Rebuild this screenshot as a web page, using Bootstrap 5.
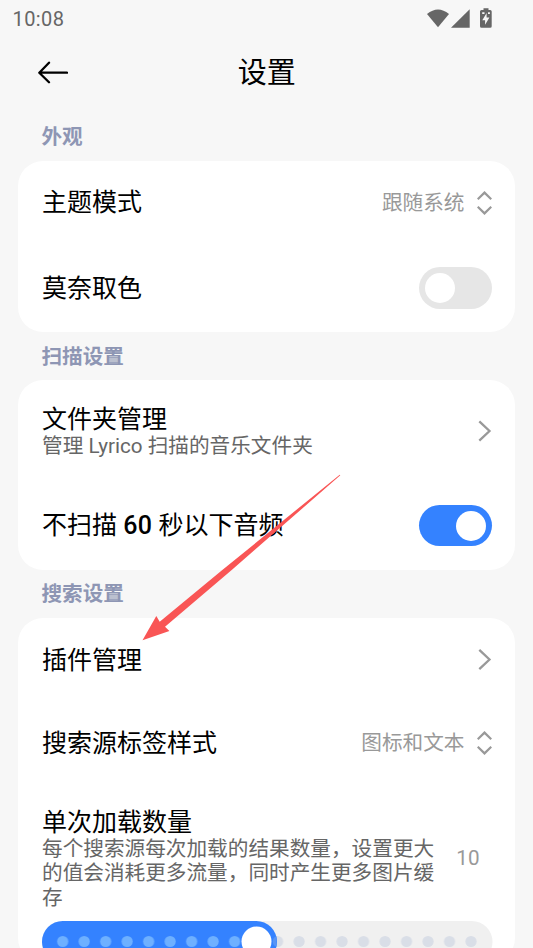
<!DOCTYPE html>
<html lang="zh-CN">
<head>
<meta charset="utf-8">
<meta name="viewport" content="width=device-width, initial-scale=1">
<title>设置</title>
<link rel="stylesheet" href="https://cdn.jsdelivr.net/npm/bootstrap@5.3.0/dist/css/bootstrap.min.css">
<style>
  body { font-family: Roboto, "Noto Sans CJK SC", sans-serif; background: #f7f7f7; color: #000; }
  .screen { width: 533px; height: 948px; }
  .status-bar { height: 37px; padding: 0 40px 0 12.5px; color: #666; font-size: 20px; letter-spacing: .4px; }
  .app-bar { height: 72px; padding: 0 38px; }
  .app-bar h1 { font-size: 29px; line-height: 40px; font-weight: 400; }
  .bar-end { width: 29.5px; }
  .section-title { height: 48px; line-height: 50px; margin: 0 0 0 41.5px; font-size: 20.6px; font-weight: 700; color: #8e96b4; }
  .section-title.first { height: 52px; line-height: 56px; }
  .section-title.third { line-height: 49px; }
  .panel { margin: 0 18px; border: 0; border-radius: 25px; background: #fff; color: #000; }
  .setting { padding: 0 23.5px 0 24px; height: 83px; }
  .setting.toggle { height: 88px; }
  .setting.described { height: 102px; padding-top: 1px; }
  .setting.described .ico { margin-bottom: 2px; }
  .setting.tall { height: 88px; padding-bottom: 1px; }
  .label { font-size: 25px; line-height: 29px; font-weight: 400; white-space: nowrap; }
  .label.low { padding-top: 2px; }
  .num { font-weight: 500; letter-spacing: .4px; }
  .desc { font-size: 20.65px; line-height: 24.3px; color: #666; }
  .val { font-size: 20.65px; line-height: 24px; color: #999; }
  .ico { fill: none; stroke: #999; stroke-width: 2.3; display: block; }
  .form-check-input.sw { width: 73px; height: 41.5px; margin: 0; border: 0; border-radius: 21px; background: #e6e6e6; position: relative; }
  .form-check-input.sw::before { content: ""; position: absolute; left: 6px; top: 6px; width: 30px; height: 30px; border-radius: 50%; background: #fff; }
  .form-check-input.sw:checked { background: #3482ff; }
  .form-check-input.sw:checked::before { left: 37px; }
  .load { padding: 24px 23.5px 0 24px; }
  .load .copy { width: 395px; }
  .load .val { padding-bottom: 2px; }
  .slider { display: block; margin: 11px 0 0 -.5px; }
  .pointer { position: absolute; left: 0; top: 0; pointer-events: none; }
</style>
<script src="https://cdn.jsdelivr.net/npm/bootstrap@5.3.0/dist/js/bootstrap.bundle.min.js"></script>
</head>
<body class="overflow-hidden">
<div class="screen position-relative overflow-hidden">
  <header>
    <div class="status-bar d-flex align-items-center justify-content-between">
      <span>10:08</span>
      <svg width="66" height="22" viewBox="427 7 66 22" fill="#666">
        <path d="M427 13Q438 3.800 449 13L438 26.300Z"/>
        <path d="M451 26.700L469.700 8.300V26.700Z"/>
        <path fill-rule="evenodd" d="M483.500 7.200h5v1.700h1.700q1.500 0 1.500 1.500v14.800q0 1.500-1.500 1.500h-8.700q-1.500 0-1.500-1.500V10.400q0-1.500 1.500-1.500h2zM486.600 12l-4.300 7.300h2.800v4.500l4.300-7.300h-2.800z"/>
        <path d="M482.200 11.300h2.300v1.800h-2.300zM488 11.300h1.900v1.800H488z" fill="#f7f7f7"/>
      </svg>
    </div>
    <div class="app-bar d-flex align-items-center justify-content-between">
      <svg width="30" height="24" viewBox="0 0 30 24" fill="none" stroke="#000" stroke-width="2.300" stroke-linecap="round" stroke-linejoin="round"><path d="M29 11.700H1.500M11 1.700L1.300 11.700L11 21.300"/></svg>
      <h1 class="m-0">设置</h1>
      <span class="bar-end"></span>
    </div>
  </header>
  <main>
    <h2 class="section-title first">外观</h2>
    <section class="card panel">
      <div class="setting d-flex align-items-center justify-content-between">
        <span class="label">主题模式</span>
        <span class="d-flex align-items-center"><span class="val me-2">跟随系统</span>
          <svg class="ico ms-1" width="15" height="24" viewBox="0 0 15 24"><path d="M.7 8.300L7.500 1.600L14.300 8.300M.7 15.700L7.500 22.400L14.300 15.700"/></svg></span>
      </div>
      <div class="setting toggle d-flex align-items-center justify-content-between">
        <span class="label">莫奈取色</span>
        <input class="form-check-input sw" type="checkbox" role="switch" aria-label="莫奈取色">
      </div>
    </section>
    <h2 class="section-title">扫描设置</h2>
    <section class="card panel">
      <div class="setting described d-flex align-items-center justify-content-between">
        <div><div class="label">文件夹管理</div><div class="desc">管理 Lyrico 扫描的音乐文件夹</div></div>
        <svg class="ico" width="14" height="22" viewBox="0 0 14 22"><path d="M1.300 1.300L11.500 11L1.300 20.700"/></svg>
      </div>
      <div class="setting tall d-flex align-items-center justify-content-between">
        <span class="label">不扫描 <span class="num">60</span> 秒以下音频</span>
        <input class="form-check-input sw" type="checkbox" role="switch" checked aria-label="不扫描 60 秒以下音频">
      </div>
    </section>
    <h2 class="section-title third">搜索设置</h2>
    <section class="card panel">
      <div class="setting d-flex align-items-center justify-content-between">
        <span class="label low">插件管理</span>
        <svg class="ico" width="14" height="22" viewBox="0 0 14 22"><path d="M1.300 .8L11.500 10.500L1.300 20.200"/></svg>
      </div>
      <div class="setting d-flex align-items-center justify-content-between">
        <span class="label low">搜索源标签样式</span>
        <span class="d-flex align-items-center"><span class="val me-2">图标和文本</span>
          <svg class="ico ms-1" width="15" height="24" viewBox="0 0 15 24"><path d="M.7 8.300L7.500 1.600L14.300 8.300M.7 15.700L7.500 22.400L14.300 15.700"/></svg></span>
      </div>
      <div class="load">
        <div class="d-flex align-items-center justify-content-between">
          <div class="copy"><div class="label">单次加载数量</div><div class="desc">每个搜索源每次加载的结果数量，设置更大的值会消耗更多流量，同时产生更多图片缓存</div></div>
          <span class="val pe-2 me-1">10</span>
        </div>
        <svg class="slider" width="451" height="42" viewBox="0 0 451 42">
          <defs><pattern id="steps" x="9.950" y="0" width="21.490" height="42" patternUnits="userSpaceOnUse"><circle cx="10.745" cy="20.500" r="5.600" fill="#d9dee7"/></pattern>
          <pattern id="stepsOn" x="9.950" y="0" width="21.490" height="42" patternUnits="userSpaceOnUse"><circle cx="10.745" cy="20.500" r="5.600" fill="#6eb0ff"/></pattern></defs>
          <rect width="450.500" height="41.500" rx="20.750" fill="#f0f0f0"/>
          <rect x="9.950" width="429.800" height="41" fill="url(#steps)"/>
          <rect width="235" height="41.500" rx="20.750" fill="#3482ff"/>
          <rect x="9.950" width="200" height="41" fill="url(#stepsOn)"/>
          <path d="M234.500 15.200A5.600 5.600 0 0 0 234.500 25.800Z" fill="#5794f5"/>
          <circle cx="214.500" cy="20.500" r="15" fill="#fff"/>
        </svg>
      </div>
    </section>
  </main>
  <svg class="pointer" width="533" height="948" viewBox="0 0 533 948"><path d="M142.500 640.300L156.300 616L159.700 621.700L222.300 570L339.700 474.700L340.300 475.300L232 569.800L165 626.700L169.400 631Z" fill="#f95555"/></svg>
</div>
</body>
</html>
